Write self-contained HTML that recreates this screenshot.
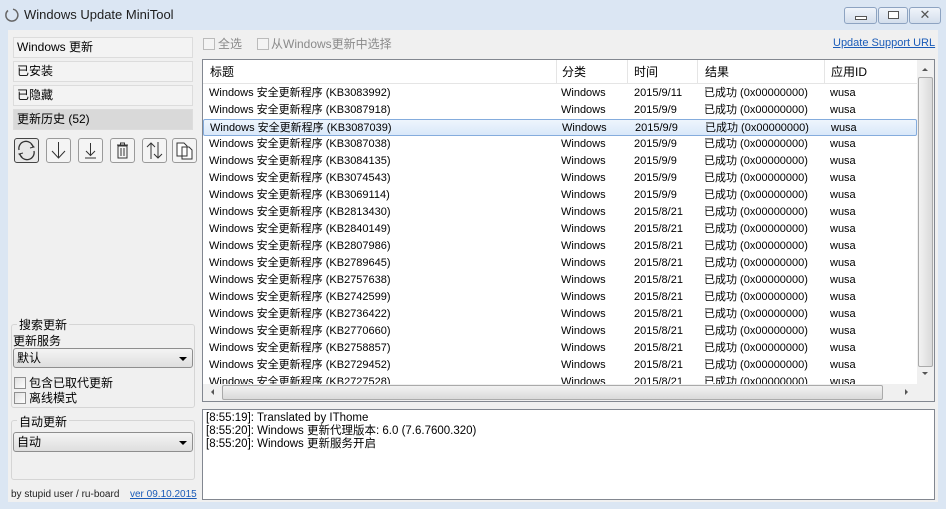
<!DOCTYPE html>
<html><head><meta charset="utf-8"><style>
*{margin:0;padding:0;box-sizing:border-box}
body{width:946px;height:509px;overflow:hidden;background:#dbe6f3;font-family:"Liberation Sans","Noto Sans CJK SC",sans-serif;font-size:12px;line-height:14px;color:#000;position:relative}
.a{position:absolute}
.title{left:24px;top:8px;font-size:13px;color:#1e1e1e}
.client{left:8px;top:30px;width:930px;height:472px;background:#f0f0f0}
.tab{left:13px;width:180px;height:21px;border:1px solid #dcdcdc;background:#f3f3f3;padding:2px 0 0 3px}
.ib{top:138px;width:25px;height:25px;border:1px solid #9a9a9a;border-radius:3px;background:#f4f4f4}
.grp{left:11px;width:184px;border:1px solid #d5d5d5;border-radius:3px}
.lg{background:#f0f0f0;padding:0 2px}
.combo{left:13px;width:180px;height:20px;border:1px solid #8e8e8e;border-radius:3px;background:linear-gradient(#f4f4f4,#dedede);padding:2px 0 0 3px}
.combo:after{content:"";position:absolute;right:5px;top:8px;border:4px solid transparent;border-top:4px solid #000}
.cb{width:12px;height:12px;border:1px solid #8f8f8f;background:linear-gradient(135deg,#e0e0e0,#fdfdfd)}
.list{left:202px;top:59px;width:733px;height:343px;border:1px solid #828790;background:#fff;overflow:hidden}
.hdr{position:absolute;top:0;height:24px;left:0;width:715px;border-bottom:1px solid #e5e5e5}
.hc{position:absolute;top:5px}
.sep{position:absolute;top:0;width:1px;height:24px;background:#e5e5e5}
.row{position:absolute;left:0;width:714px;height:17px}
.row span{position:absolute;top:2px;font-size:11px;line-height:13px;white-space:nowrap}
.sel{background:linear-gradient(#eef5fd,#d9e8f9);border:1px solid #84acdd;border-radius:2px}
.log{left:202px;top:409px;width:733px;height:91px;border:1px solid #828790;background:#fff;padding:2px 3px;line-height:13px;font-size:11.5px}
</style></head><body>
<svg class="a" style="left:4px;top:7px" width="16" height="16" viewBox="0 0 16 16"><path d="M4 3.5A6 6 0 1 0 9 2.2" fill="none" stroke="#666" stroke-width="1.5"/></svg>
<div class="a title">Windows Update MiniTool</div>
<div class="a" style="left:844px;top:7px;width:33px;height:17px;border:1px solid #8da3c1;border-radius:3px;background:linear-gradient(#f0f4fa,#d3deec)"><div class="a" style="left:10px;top:8px;width:12px;height:4px;border:1px solid #555;background:#fff"></div></div>
<div class="a" style="left:878px;top:7px;width:30px;height:17px;border:1px solid #8da3c1;border-radius:3px;background:linear-gradient(#f0f4fa,#d3deec)"><div class="a" style="left:9px;top:3px;width:11px;height:8px;border:1px solid #555;background:#fff"></div></div>
<div class="a" style="left:909px;top:7px;width:32px;height:17px;border:1px solid #8da3c1;border-radius:3px;background:linear-gradient(#f0f4fa,#d3deec);text-align:center;font-size:13px;line-height:14px;color:#555">✕</div>
<div class="a client"></div>
<div class="a tab" style="top:37px">Windows 更新</div>
<div class="a tab" style="top:61px">已安装</div>
<div class="a tab" style="top:85px">已隐藏</div>
<div class="a tab" style="top:109px;background:#d9d9d9">更新历史 (52)</div>
<div class="a ib" style="left:14px;border-color:#444;background:#e8e8e8"><svg width="23" height="23"><path d="M4 11A7 7 0 0 1 18 8M19 12A7 7 0 0 1 5 15" fill="none" stroke="#333" stroke-width="1.3"/><path d="M16 5l3 3-4 1M7 18l-3-3 4-1" fill="none" stroke="#333"/></svg></div>
<div class="a ib" style="left:46px"><svg width="23" height="23"><path d="M11.5 3v16M5 12l6.5 7 6.5-7" fill="none" stroke="#333"/></svg></div>
<div class="a ib" style="left:78px"><svg width="23" height="23"><path d="M11.5 4v12M7 12l4.5 4.5 4.5-4.5M6 19h11" fill="none" stroke="#333"/></svg></div>
<div class="a ib" style="left:110px"><svg width="23" height="23"><path d="M6 6h11M9.5 6V4h4v2M7 7h9v12H7zM10 9v8M13 9v8" fill="none" stroke="#333"/></svg></div>
<div class="a ib" style="left:142px"><svg width="23" height="23"><path d="M8 20V4M4 8l4-4 4 4M15 3v16M11 15l4 4 4-4" fill="none" stroke="#333"/></svg></div>
<div class="a ib" style="left:172px"><svg width="23" height="23"><path d="M4 4h7l3 3v10H4zM9 8h7l3 3v9H9z" fill="#fff" stroke="#333"/></svg></div>
<div class="a grp" style="top:324px;height:84px"></div>
<div class="a lg" style="left:17px;top:318px">搜索更新</div>
<div class="a" style="left:13px;top:334px">更新服务</div>
<div class="a combo" style="top:348px">默认</div>
<div class="a cb" style="left:14px;top:377px"></div><div class="a" style="left:29px;top:376px">包含已取代更新</div>
<div class="a cb" style="left:14px;top:392px"></div><div class="a" style="left:29px;top:391px">离线模式</div>
<div class="a grp" style="top:420px;height:60px"></div>
<div class="a lg" style="left:17px;top:415px">自动更新</div>
<div class="a combo" style="top:432px">自动</div>
<div class="a" style="left:11px;top:488px;font-size:10px;color:#222">by stupid user / ru-board</div>
<div class="a" style="left:130px;top:488px;font-size:10px;color:#1a5bb8;text-decoration:underline">ver 09.10.2015</div>
<div class="a cb" style="left:203px;top:38px;border-color:#bbb;background:#f4f4f4"></div><div class="a" style="left:218px;top:37px;color:#8a8a8a">全选</div>
<div class="a cb" style="left:257px;top:38px;border-color:#bbb;background:#f4f4f4"></div><div class="a" style="left:271px;top:37px;color:#8a8a8a">从Windows更新中选择</div>
<div class="a" style="left:833px;top:36px;color:#1a5bb8;text-decoration:underline;font-size:11px">Update Support URL</div>
<div class="a list">
<div class="hdr"><span class="hc" style="left:7px">标题</span><div class="sep" style="left:353px"></div><span class="hc" style="left:359px">分类</span><div class="sep" style="left:424px"></div><span class="hc" style="left:431px">时间</span><div class="sep" style="left:494px"></div><span class="hc" style="left:502px">结果</span><div class="sep" style="left:621px"></div><span class="hc" style="left:628px">应用ID</span></div>
<div id="rows"></div>
<div class="a" style="left:714px;top:0;width:17px;height:324px;background:#f0f0f0"><div class="a" style="left:1px;top:17px;width:15px;height:290px;border:1px solid #aaa;border-radius:2px;background:linear-gradient(90deg,#f2f2f2,#dadada)"></div><div class="a" style="left:5px;top:5px;border:3px solid transparent;border-bottom:3px solid #555"></div><div class="a" style="left:5px;top:312px;border:3px solid transparent;border-top:3px solid #555"></div></div>
<div class="a" style="left:0;top:324px;width:714px;height:17px;background:#f0f0f0"><div class="a" style="left:19px;top:1px;width:661px;height:15px;border:1px solid #aaa;border-radius:2px;background:linear-gradient(#f2f2f2,#dadada)"></div><div class="a" style="left:5px;top:5px;border:3px solid transparent;border-right:3px solid #555"></div><div class="a" style="left:702px;top:5px;border:3px solid transparent;border-left:3px solid #555"></div></div>
<div class="a" style="left:714px;top:324px;width:17px;height:17px;background:#f0f0f0"></div>
</div>
<div class="a log">[8:55:19]: Translated by IThome<br>[8:55:20]: Windows 更新代理版本: 6.0 (7.6.7600.320)<br>[8:55:20]: Windows 更新服务开启</div>
<script>
var kb=["3083992","3087918","3087039","3087038","3084135","3074543","3069114","2813430","2840149","2807986","2789645","2757638","2742599","2736422","2770660","2758857","2729452","2727528"];
var d=["2015/9/11","2015/9/9","2015/9/9","2015/9/9","2015/9/9","2015/9/9","2015/9/9"];
var h="";
for(var i=0;i<kb.length;i++){
h+='<div class="row'+(i==2?' sel':'')+'" style="top:'+(25+17*i)+'px"><span style="left:6px">Windows 安全更新程序 (KB'+kb[i]+')</span><span style="left:358px">Windows</span><span style="left:431px">'+(d[i]||"2015/8/21")+'</span><span style="left:501px">已成功 (0x00000000)</span><span style="left:627px">wusa</span></div>';
}
document.getElementById("rows").innerHTML=h;
</script>
</body></html>
